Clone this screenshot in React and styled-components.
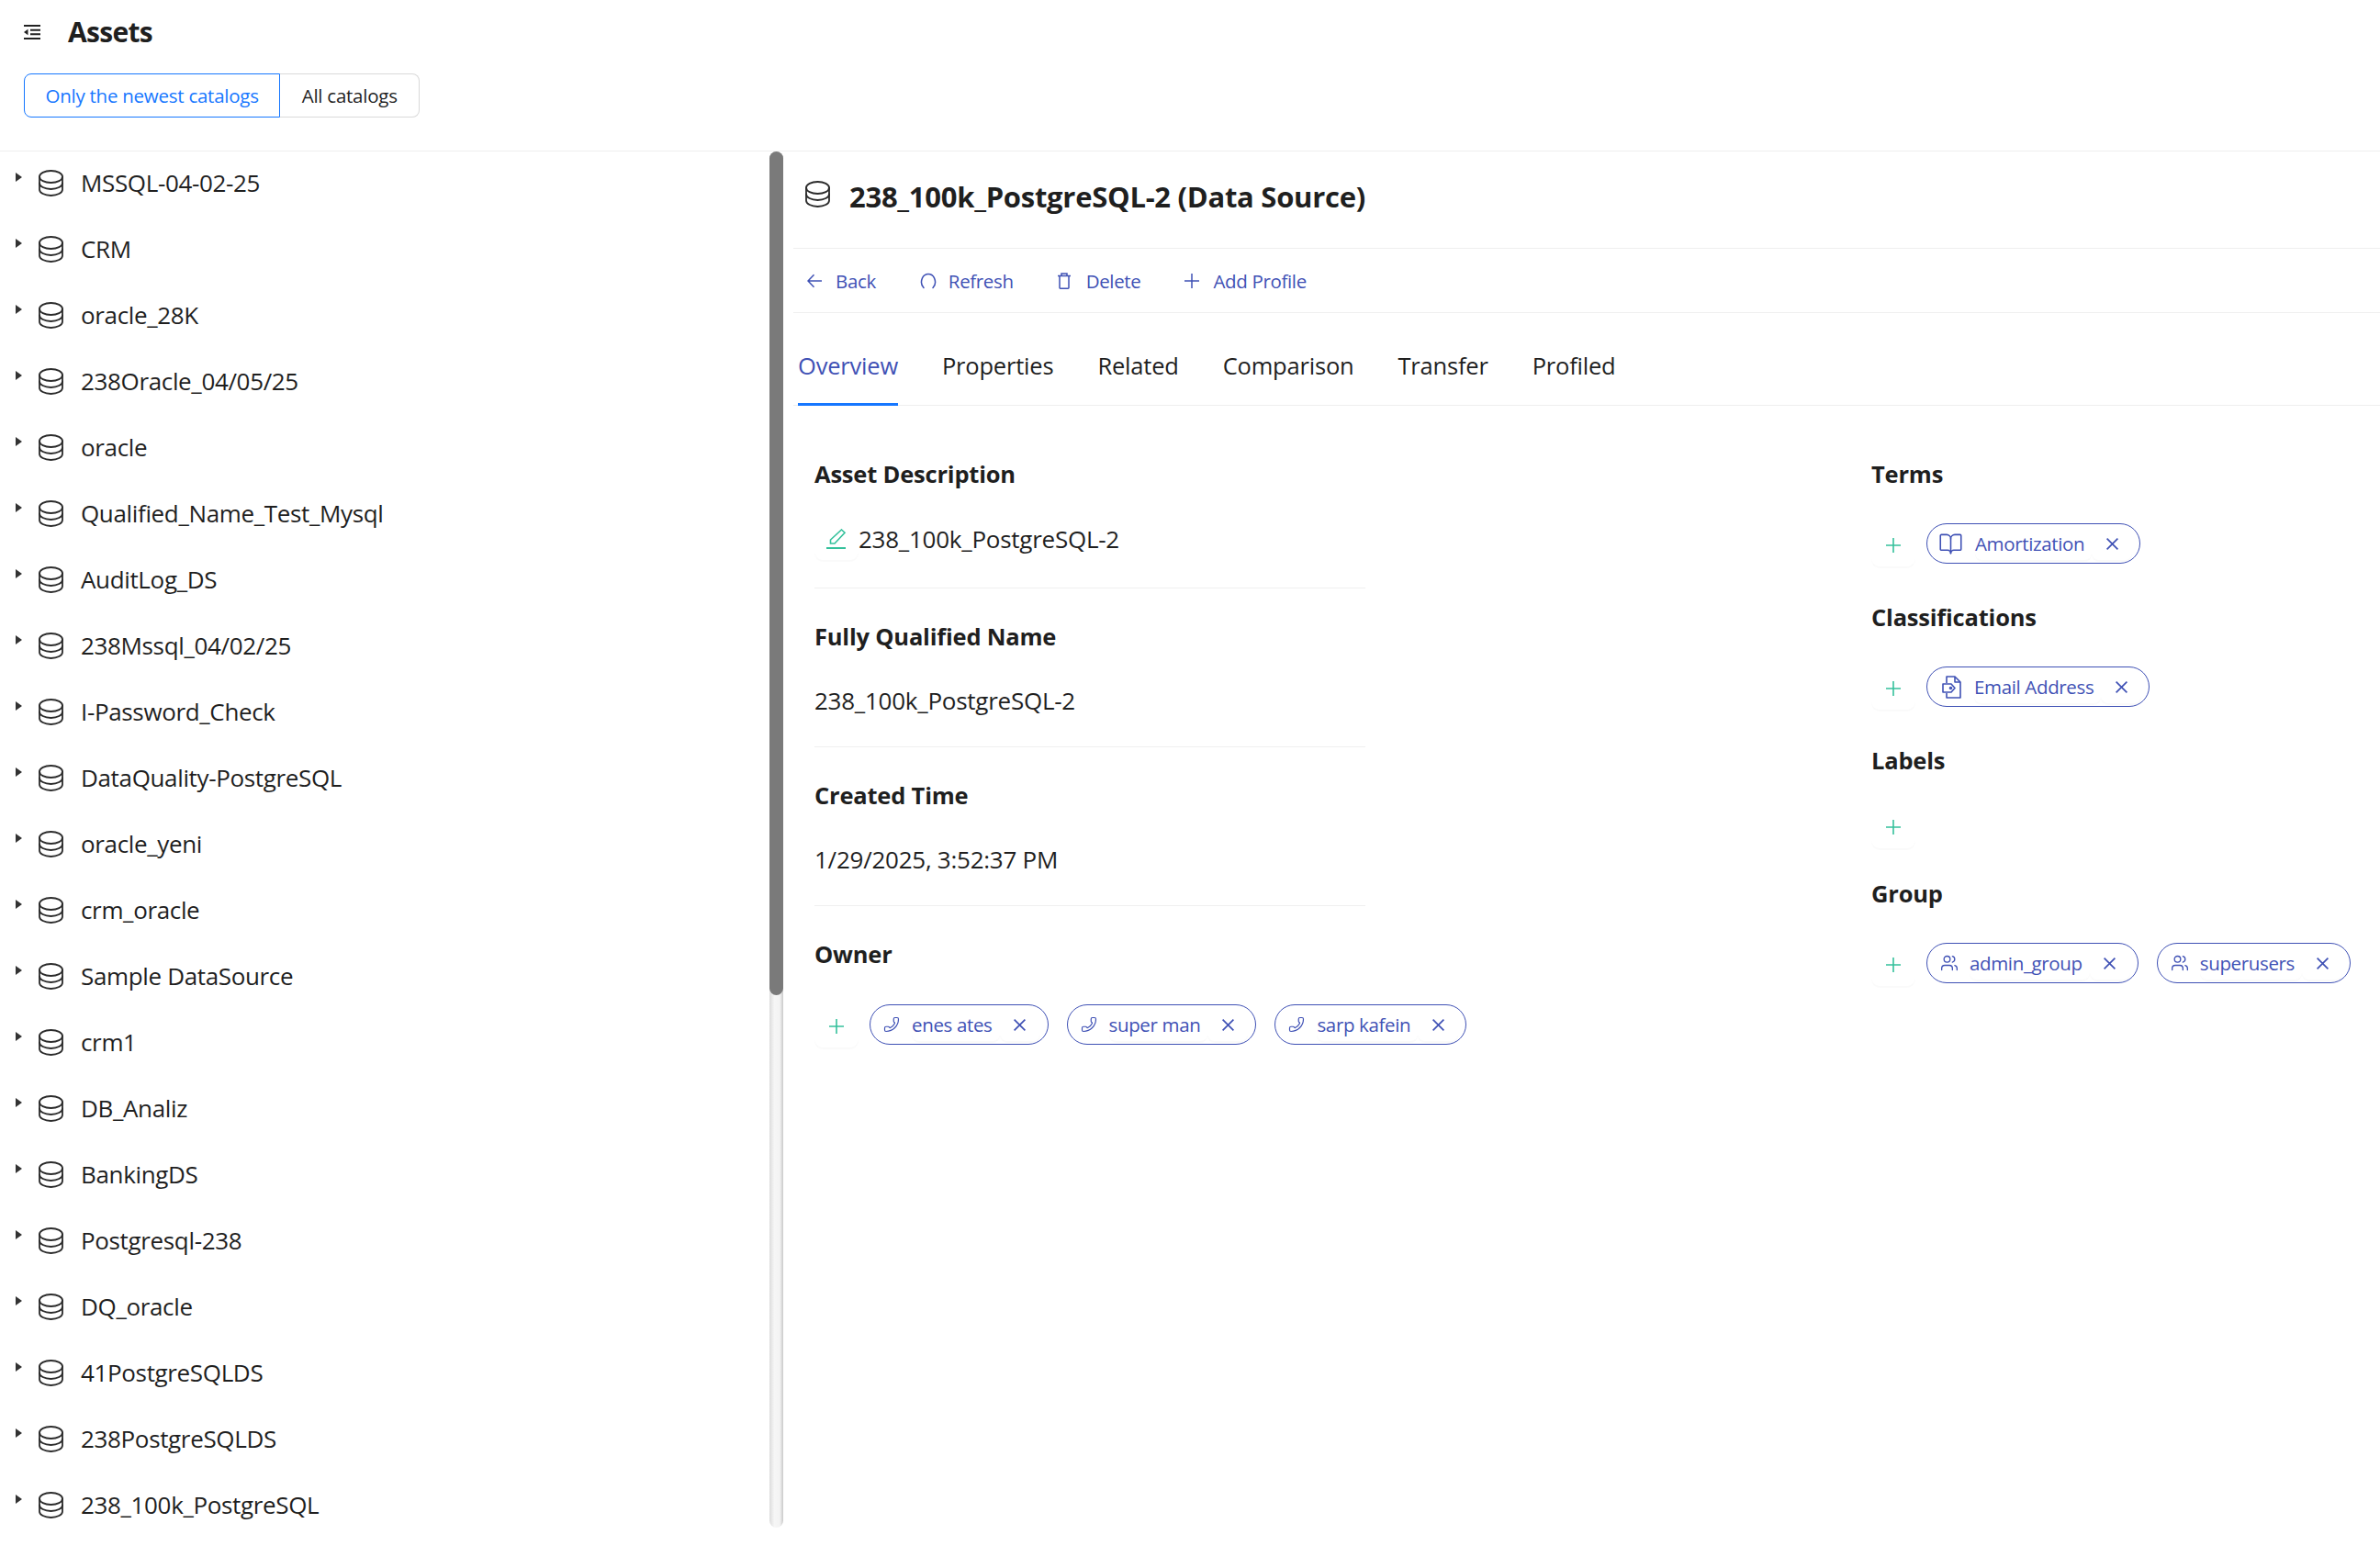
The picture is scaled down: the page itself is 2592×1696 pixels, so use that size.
import React from 'react'
import styled, { createGlobalStyle } from 'styled-components'
import { BookOpen, Phone, Users } from 'lucide-react'

const BLUE = '#3f51b5'
const GREEN = '#35c19c'
const INK = '#1f1f1f'
const LINE = '#efefef'

const GlobalStyle = createGlobalStyle`
  html, body { margin: 0; padding: 0; background: #fff; }
  body { font-family: "Open Sans", "Noto Sans", sans-serif; color: ${INK}; }
  button { font-family: inherit; }
`

const Page = styled.div`
  width: 2592px;
  height: 1696px;
  display: flex;
  flex-direction: column;
  overflow: hidden;
`

const Header = styled.header`
  flex: none;
  height: 165px;
  box-sizing: border-box;
  border-bottom: 1px solid ${LINE};
  padding: 15px 0 0 26px;
`

const TitleRow = styled.div`
  display: flex;
  align-items: center;
  height: 40px;
  gap: 30px;
  margin-bottom: 25px;
`

const PageTitle = styled.h1`
  margin: 0;
  font-size: 30px;
  line-height: 40px;
  font-weight: 700;
  letter-spacing: -0.7px;
`

const Toggle = styled.div`
  display: flex;
`

const ToggleButton = styled.button`
  height: 48px;
  box-sizing: border-box;
  padding: 0 ${p => (p.$active ? '22.5px' : '23.5px')};
  background: #fff;
  font-size: 20.5px;
  letter-spacing: -0.25px;
  color: ${p => (p.$active ? '#1677ff' : INK)};
  border: 1px solid ${p => (p.$active ? '#1677ff' : '#d9d9d9')};
  border-left-width: ${p => (p.$active ? '1px' : '0')};
  border-radius: ${p => (p.$active ? '8px 0 0 8px' : '0 8px 8px 0')};
`

const Main = styled.div`
  flex: 1;
  display: flex;
  min-height: 0;
`

const Tree = styled.div`
  width: 838px;
  flex: none;
  overflow: hidden;
  margin-top: -2px;
`

const TreeRow = styled.div`
  height: 72px;
  display: flex;
  align-items: center;
  padding-left: 17px;
`

const Caret = styled.span`
  width: 0;
  height: 0;
  border-left: 7px solid #333;
  border-top: 5px solid transparent;
  border-bottom: 5px solid transparent;
  margin: 0 18px 13px 0;
`

const TreeLabel = styled.span`
  margin-left: 19px;
  font-size: 26px;
  letter-spacing: -0.35px;
  white-space: nowrap;
`

const ScrollTrack = styled.div`
  width: 15px;
  height: 1499px;
  flex: none;
  border-radius: 8px;
  background: linear-gradient(90deg, #dcdcdc, #f6f6f6 35%, #f3f3f3 75%, #c9c9c9);
`

const ScrollThumb = styled.div`
  height: 919px;
  border-radius: 8px;
  background: #7a7a7a;
`

const Detail = styled.section`
  flex: 1;
  min-width: 0;
  padding-left: 11px;
`

const DetailHead = styled.div`
  height: 97px;
  padding: 0 0 8px 13px;
  border-bottom: 1px solid ${LINE};
  display: flex;
  align-items: center;
  gap: 21px;
`

const DetailTitle = styled.h2`
  margin: 0;
  font-size: 31px;
  font-weight: 700;
  letter-spacing: -0.27px;
  line-height: 40px;
`

const HeadIcon = styled.span`
  display: flex;
  margin-bottom: 5px;
`

const Toolbar = styled.div`
  height: 70px;
  padding: 1px 0 0 15px;
  box-sizing: border-box;
  border-bottom: 1px solid ${LINE};
  display: flex;
  align-items: center;
  gap: 48px;
`

const ToolButton = styled.button`
  display: flex;
  align-items: center;
  gap: ${p => p.$gap || 15}px;
  padding: 0;
  border: 0;
  background: none;
  color: ${BLUE};
  font-size: 20.5px;
  letter-spacing: -0.35px;
`

const Tabs = styled.div`
  height: 101px;
  box-sizing: border-box;
  border-bottom: 1px solid ${LINE};
  display: flex;
  padding-left: 5px;
  gap: 48px;
`

const Tab = styled.div`
  height: 101px;
  box-sizing: border-box;
  padding-top: 39px;
  font-size: 25.5px;
  line-height: 36px;
  letter-spacing: -0.2px;
  color: ${p => (p.$active ? BLUE : INK)};
  border-bottom: 3px solid ${p => (p.$active ? '#1677ff' : 'transparent')};
`

const Content = styled.div`
  display: grid;
  grid-template-columns: 1151px 1fr;
  padding: 56px 0 0 23px;
`

const LeftColumn = styled.div`
  width: 600px;
`

const Section = styled.div`
  padding-bottom: ${p => p.$pad}px;
  margin-bottom: 34px;
  border-bottom: 1px solid ${LINE};
`

const SectionTitle = styled.h3`
  margin: 0;
  font-size: 25.5px;
  font-weight: 700;
  line-height: 36px;
  letter-spacing: -0.2px;
`

const Value = styled.div`
  margin-top: ${p => p.$top ?? 34}px;
  height: ${p => p.$h || 36}px;
  display: flex;
  align-items: center;
  font-size: 26px;
  letter-spacing: -0.25px;
  white-space: nowrap;
`

const ChipRow = styled.div`
  display: flex;
  align-items: flex-start;
  margin-top: ${p => p.$top ?? 36}px;
  margin-bottom: ${p => p.$bottom ?? 40}px;
  height: ${p => p.$h || 44}px;
`

const GhostButton = styled.button`
  width: 48px;
  height: 47px;
  flex: none;
  padding: 0;
  margin-right: ${p => p.$mr ?? 12}px;
  display: flex;
  align-items: center;
  justify-content: center;
  border: 0;
  border-radius: 9px;
  background: #fff;
  color: ${GREEN};
  box-shadow: 0 2px 0 rgba(0, 0, 0, 0.02);
`

const Chip = styled.div`
  height: 44px;
  box-sizing: border-box;
  display: flex;
  align-items: center;
  margin-right: 20px;
  padding-left: ${p => p.$pad}px;
  border: 1.5px solid ${BLUE};
  border-radius: 22px;
  color: ${BLUE};
`

const ChipText = styled.span`
  margin-left: ${p => p.$gap}px;
  height: 36px;
  line-height: 37px;
  padding-right: 8px;
  border-radius: 8px;
  font-size: 20.5px;
  letter-spacing: -0.35px;
  white-space: nowrap;
  box-shadow: 0 2px 0 rgba(0, 0, 0, 0.02);
`

const ChipClose = styled.button`
  width: 44px;
  height: 36px;
  margin: 0 8px 0 0;
  padding: 0;
  display: flex;
  align-items: center;
  justify-content: center;
  border: 0;
  border-radius: 8px;
  background: #fff;
  color: ${BLUE};
  box-shadow: 0 2px 0 rgba(0, 0, 0, 0.02);
`

const DbIcon = () => (
  <svg width="27" height="29" viewBox="0 0 27 29" fill="none" stroke="#2b2b2b" strokeWidth="1.8" strokeLinecap="round">
    <ellipse cx="13.5" cy="7.5" rx="12.5" ry="6.5" />
    <path d="M1 7.5V21.5C1 25 6.5 28 13.5 28S26 25 26 21.5V7.5" />
    <path d="M1 14.5C1 18 6.5 21 13.5 21S26 18 26 14.5" />
  </svg>
)

const MenuIcon = () => (
  <svg width="18" height="16" viewBox="0 0 18 16" fill="none" stroke="#222" strokeWidth="2">
    <path d="M0 1H18M7 5.7H18M7 10.3H18M0 15H18" />
    <path d="M0 8L4.5 4.8V11.2Z" fill="#222" stroke="none" />
  </svg>
)

const PlusGlyph = ({ size = 16, weight = 1.6 }) => (
  <svg width={size} height={size} viewBox="0 0 16 16" fill="none" stroke="currentColor" strokeWidth={weight}>
    <path d="M8 0V16M0 8H16" />
  </svg>
)

const CloseGlyph = () => (
  <svg width="13" height="13" viewBox="0 0 13 13" fill="none" stroke="currentColor" strokeWidth="1.7">
    <path d="M.6 .6L12.4 12.4M12.4 .6L.6 12.4" />
  </svg>
)

const BackGlyph = () => (
  <svg width="16" height="16" viewBox="0 0 16 16" fill="none" stroke="currentColor" strokeWidth="1.5">
    <path d="M16 8H1M7.5 1.2L1 8L7.5 14.8" />
  </svg>
)

const RefreshIcon = () => (
  <svg width="18" height="18" viewBox="0 0 18 18" fill="none" stroke={BLUE} strokeWidth="1.5" strokeLinecap="round">
    <path d="M4 16.5C1.2 13.5 1 9 2.6 5.6 4 2.8 6.4 1.5 9 1.5S14 2.8 15.4 5.6C17 9 16.8 13.5 14 16.5" />
  </svg>
)

const TrashIcon = () => (
  <svg width="14" height="18" viewBox="0 0 14 18" fill="none" stroke={BLUE} strokeWidth="1.5">
    <path d="M0 3.5H14M4 3.5V1H10V3.5M2 3.5V16.5A.8.8 0 0 0 2.8 17.2H11.2A.8.8 0 0 0 12 16.5V3.5" />
  </svg>
)

const PencilIcon = () => (
  <svg width="22" height="22" viewBox="0 0 22 22" fill="none" stroke={GREEN} strokeWidth="1.6">
    <path d="M16.5 1L20 4.2 9 16H4.5V12Z" />
    <path d="M0 21H21" strokeWidth="2" />
  </svg>
)

const FileTagIcon = () => (
  <svg width="21" height="25" viewBox="0 0 21 25" fill="none" stroke={BLUE} strokeWidth="1.6" strokeLinejoin="round">
    <path d="M5 8V1H14L20 7V24H5V19" />
    <path d="M14 1V7H20" />
    <path d="M1 9H10L14 13.5 10 18H1Z" fill="#fff" />
    <circle cx="9.5" cy="13.5" r="1" />
  </svg>
)

const FlippedPhone = styled(Phone)`
  transform: scaleX(-1);
`

const rows = [
  'MSSQL-04-02-25', 'CRM', 'oracle_28K', '238Oracle_04/05/25', 'oracle', 'Qualified_Name_Test_Mysql',
  'AuditLog_DS', '238Mssql_04/02/25', 'I-Password_Check', 'DataQuality-PostgreSQL', 'oracle_yeni',
  'crm_oracle', 'Sample DataSource', 'crm1', 'DB_Analiz', 'BankingDS', 'Postgresql-238', 'DQ_oracle',
  '41PostgreSQLDS', '238PostgreSQLDS', '238_100k_PostgreSQL',
]

const tabs = ['Overview', 'Properties', 'Related', 'Comparison', 'Transfer', 'Profiled']

const TagChip = ({ icon, label, pad, gap }) => (
  <Chip $pad={pad}>
    {icon}
    <ChipText $gap={gap}>{label}</ChipText>
    <ChipClose><CloseGlyph /></ChipClose>
  </Chip>
)

const AddButton = () => (
  <GhostButton><PlusGlyph /></GhostButton>
)

const phone = <FlippedPhone size={18} strokeWidth={1.6} />
const users = <Users size={20} strokeWidth={1.6} />

export default function App() {
  return (
    <Page>
      <GlobalStyle />
      <Header>
        <TitleRow>
          <MenuIcon />
          <PageTitle>Assets</PageTitle>
        </TitleRow>
        <Toggle>
          <ToggleButton $active>Only the newest catalogs</ToggleButton>
          <ToggleButton>All catalogs</ToggleButton>
        </Toggle>
      </Header>
      <Main>
        <Tree>
          {rows.map(name => (
            <TreeRow key={name}>
              <Caret />
              <DbIcon />
              <TreeLabel>{name}</TreeLabel>
            </TreeRow>
          ))}
        </Tree>
        <ScrollTrack><ScrollThumb /></ScrollTrack>
        <Detail>
          <DetailHead>
            <HeadIcon><DbIcon /></HeadIcon>
            <DetailTitle>238_100k_PostgreSQL-2 (Data Source)</DetailTitle>
          </DetailHead>
          <Toolbar>
            <ToolButton><BackGlyph />Back</ToolButton>
            <ToolButton $gap={13}><RefreshIcon />Refresh</ToolButton>
            <ToolButton $gap={17}><TrashIcon />Delete</ToolButton>
            <ToolButton><PlusGlyph weight={1.5} />Add Profile</ToolButton>
          </Toolbar>
          <Tabs>
            {tabs.map((t, i) => <Tab key={t} $active={i === 0}>{t}</Tab>)}
          </Tabs>
          <Content>
            <LeftColumn>
              <Section $pad={34}>
                <SectionTitle>Asset Description</SectionTitle>
                <Value $top={33} $h={39}>
                  <GhostButton $mr={0}><PencilIcon /></GhostButton>
                  238_100k_PostgreSQL-2
                </Value>
              </Section>
              <Section $pad={32}>
                <SectionTitle>Fully Qualified Name</SectionTitle>
                <Value>238_100k_PostgreSQL-2</Value>
              </Section>
              <Section $pad={32}>
                <SectionTitle>Created Time</SectionTitle>
                <Value>1/29/2025, 3:52:37 PM</Value>
              </Section>
              <div>
                <SectionTitle>Owner</SectionTitle>
                <ChipRow $top={37}>
                  <AddButton />
                  <TagChip icon={phone} label="enes ates" pad={14} gap={13} />
                  <TagChip icon={phone} label="super man" pad={14} gap={13} />
                  <TagChip icon={phone} label="sarp kafein" pad={14} gap={13} />
                </ChipRow>
              </div>
            </LeftColumn>
            <div>
              <SectionTitle>Terms</SectionTitle>
              <ChipRow>
                <AddButton />
                <TagChip icon={<BookOpen size={27} strokeWidth={1.4} />} label="Amortization" pad={12} gap={13} />
              </ChipRow>
              <SectionTitle>Classifications</SectionTitle>
              <ChipRow>
                <AddButton />
                <TagChip icon={<FileTagIcon />} label="Email Address" pad={16} gap={14} />
              </ChipRow>
              <SectionTitle>Labels</SectionTitle>
              <ChipRow $top={31} $bottom={31} $h={47}>
                <AddButton />
              </ChipRow>
              <SectionTitle>Group</SectionTitle>
              <ChipRow>
                <AddButton />
                <TagChip icon={users} label="admin_group" pad={14} gap={12} />
                <TagChip icon={users} label="superusers" pad={14} gap={12} />
              </ChipRow>
            </div>
          </Content>
        </Detail>
      </Main>
    </Page>
  )
}
